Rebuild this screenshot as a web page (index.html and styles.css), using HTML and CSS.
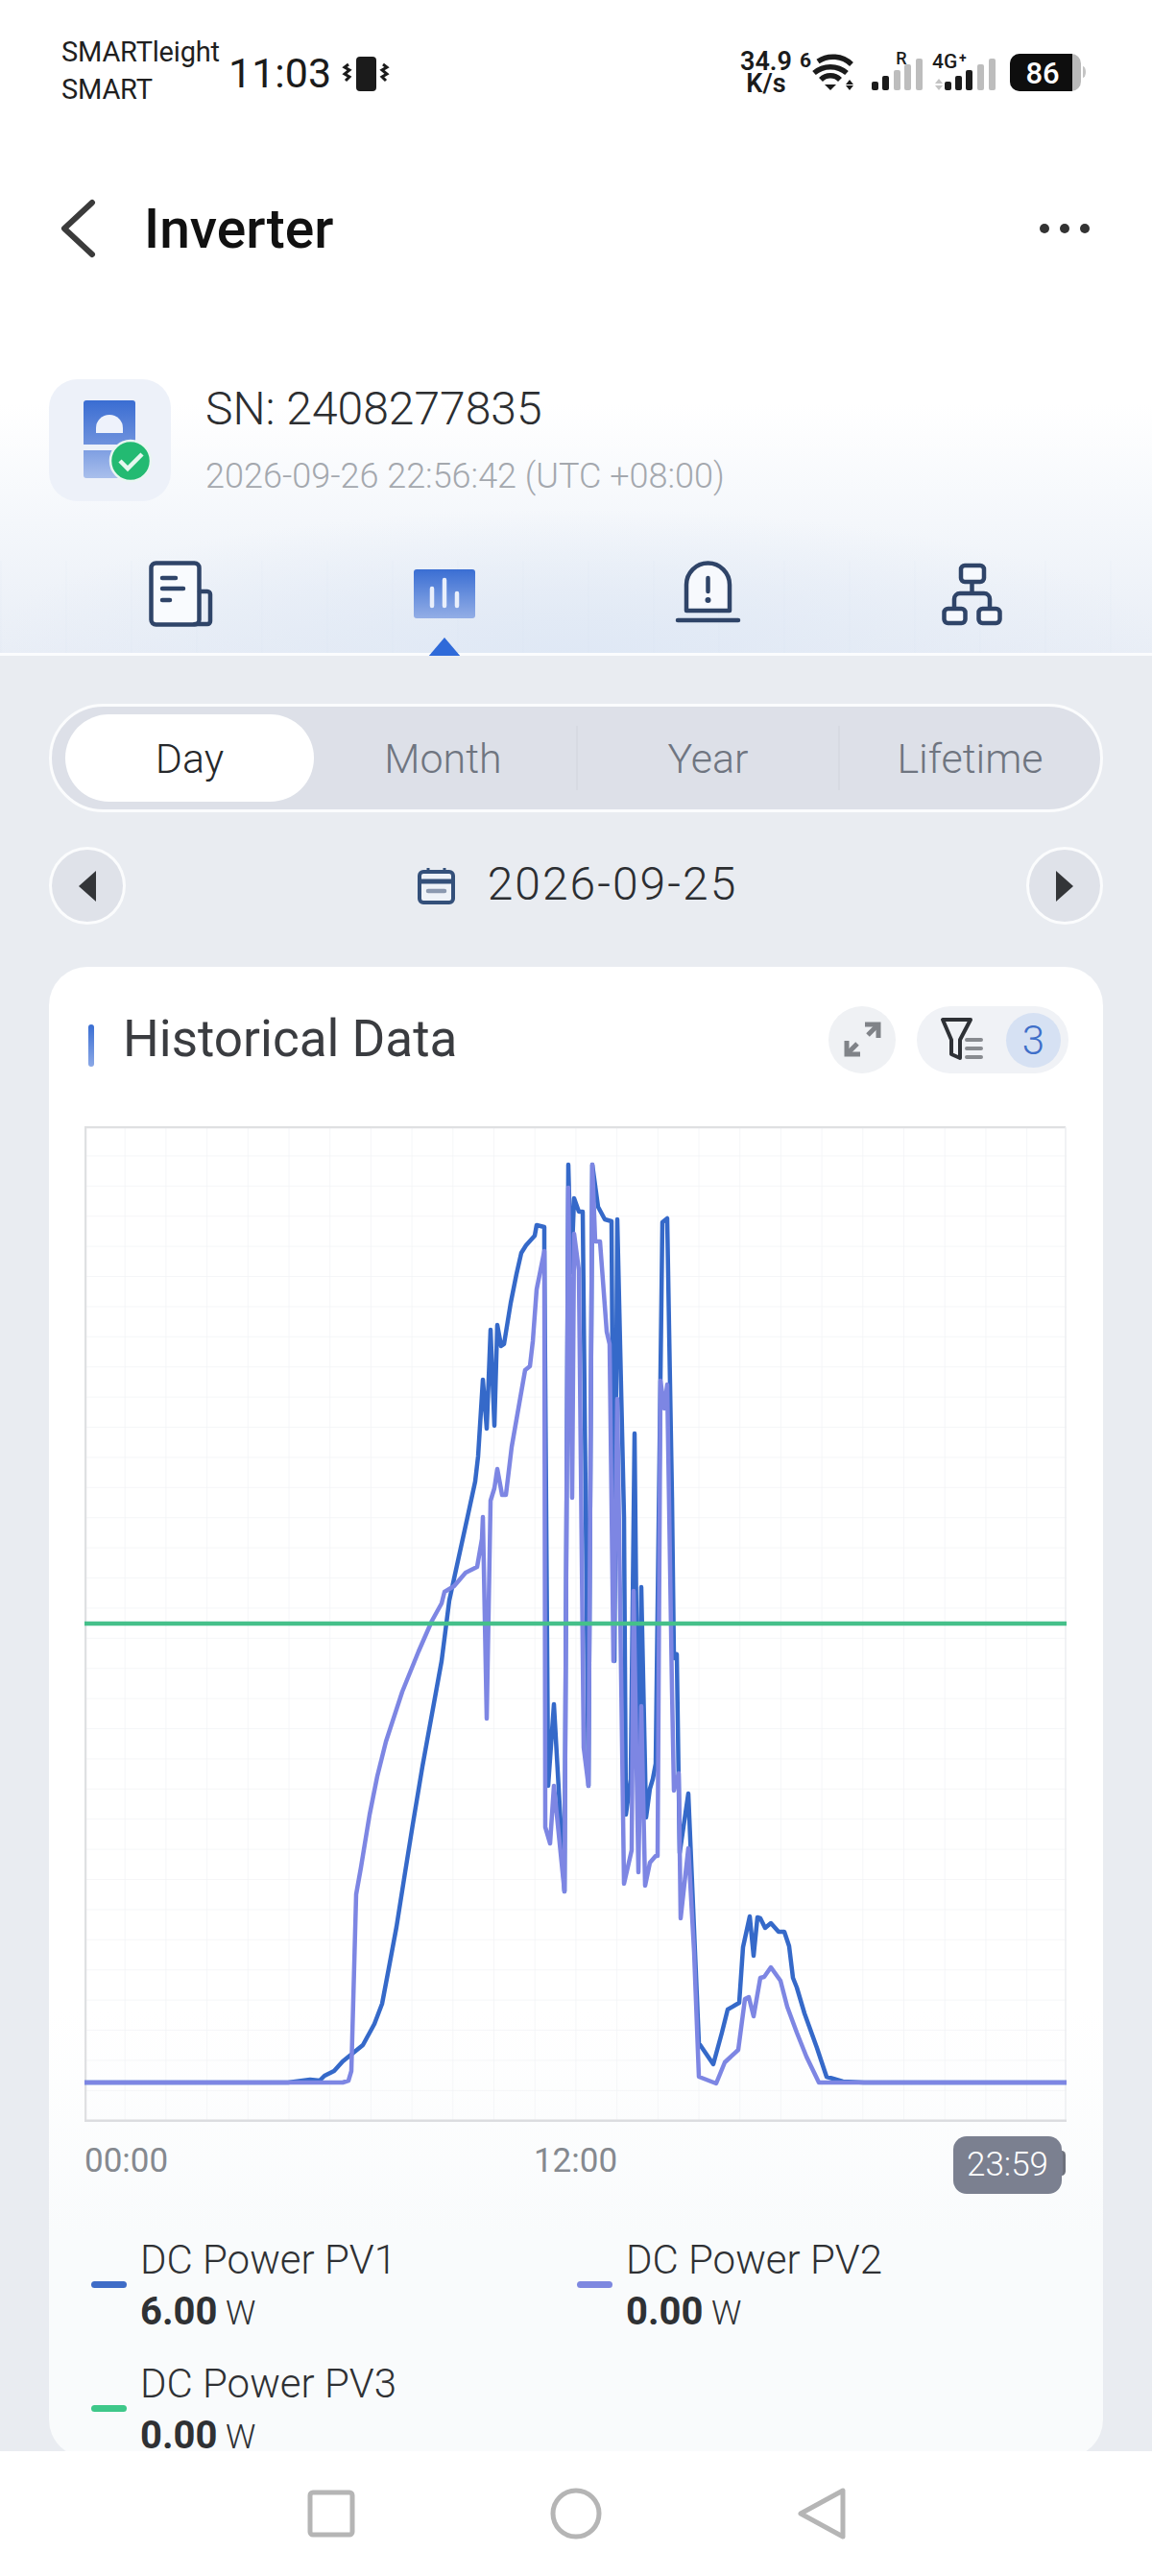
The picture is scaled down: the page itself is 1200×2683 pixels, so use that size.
FILE: index.html
```html
<!DOCTYPE html>
<html lang="en">
<head>
    <meta charset="UTF-8">
    <meta name="viewport" content="width=device-width, initial-scale=1.0">
    <title>Inverter</title>
    <link rel="stylesheet" href="styles.css">
</head>
<body>
<div class="phone">
    <div class="top-section">
        <div class="statusbar">
            <div class="carrier">
                <div>SMARTleight</div>
                <div>SMART</div>
            </div>
            <div class="clock">11:03</div>
            <svg class="vibrate" width="50" height="40" viewBox="0 0 50 40">
                <rect x="15" y="2" width="21" height="36" rx="4" fill="#1b1b1b"/>
                <path d="M7 10l-4 3 5 3-5 4 5 3-4 4" fill="none" stroke="#1b1b1b" stroke-width="3"/>
                <path d="M43 10l4 3-5 3 5 4-5 3 4 4" fill="none" stroke="#1b1b1b" stroke-width="3"/>
            </svg>
            <svg class="status-icons" width="370" height="60" viewBox="0 0 370 60">
                <text class="st-speed" x="33" y="28" text-anchor="middle">34.9</text>
                <text class="st-speed" x="33" y="51" text-anchor="middle">K/s</text>
                <text class="st-six" x="74" y="25" text-anchor="middle">6</text>
                <g fill="none" stroke="#1b1b1b" stroke-width="5.5">
                    <path d="M87 19a28 28 0 0 1 35 3"/>
                    <path d="M83 26a26 26 0 0 1 34 0" transform="translate(0 5)"/>
                    <path d="M90 37a14 14 0 0 1 20 0" transform="translate(0 1)"/>
                </g>
                <path d="M94 43h12l-6 6z" fill="#1b1b1b"/>
                <path d="M120 38l4 5h-8zM120 49l4-5h-8z" fill="#1b1b1b"/>
                <g fill="#1b1b1b">
                    <rect x="143" y="40" width="7" height="9" rx="2"/>
                    <rect x="154" y="34" width="7" height="15" rx="2"/>
                </g>
                <g fill="#bdbdbd">
                    <rect x="166" y="28" width="7" height="21" rx="2"/>
                    <rect x="177" y="22" width="7" height="27" rx="2"/>
                    <rect x="189" y="16" width="7" height="33" rx="2"/>
                </g>
                <text class="st-r" x="174" y="22" text-anchor="middle">R</text>
                <text class="st-net" x="206" y="26">4G</text>
                <text class="st-plus" x="234" y="20">+</text>
                <path d="M213 37l4 5h-8zM213 49l4-5h-8z" fill="#c4c4c4"/>
                <g fill="#1b1b1b">
                    <rect x="219" y="40" width="7" height="9" rx="2"/>
                    <rect x="230" y="34" width="7" height="15" rx="2"/>
                    <rect x="241" y="28" width="7" height="21" rx="2"/>
                </g>
                <g fill="#bdbdbd">
                    <rect x="253" y="22" width="7" height="27" rx="2"/>
                    <rect x="265" y="16" width="7" height="33" rx="2"/>
                </g>
                <rect x="287" y="11" width="74" height="39" rx="10" fill="#b9b9b9"/>
                <path d="M297 11h55v39h-55a10 10 0 0 1-10-10v-19a10 10 0 0 1 10-10z" fill="#0e0e0e"/>
                <path d="M363 24a3 6 0 0 1 3 6a3 6 0 0 1-3 6z" fill="#c4c4c4"/>
                <text class="st-batt" x="321" y="42" text-anchor="middle">86</text>
            </svg>
        </div>

        <div class="appbar">
            <svg width="44" height="64" viewBox="0 0 44 64">
                <path d="M36 5L7 32l29 27" fill="none" stroke="#3b3b3b" stroke-width="6" stroke-linecap="round" stroke-linejoin="round"/>
            </svg>
            <h1>Inverter</h1>
            <div class="more"><i></i><i></i><i></i></div>
        </div>

        <div class="device">
            <div class="device-tile">
                <svg width="127" height="127" viewBox="0 0 127 127">
                    <defs>
                        <linearGradient id="blockA" x1="0" y1="0" x2="0" y2="1">
                            <stop offset="0" stop-color="#3a6dd2"/>
                            <stop offset="1" stop-color="#6f92dd"/>
                        </linearGradient>
                        <linearGradient id="blockB" x1="0" y1="0" x2="0" y2="1">
                            <stop offset="0" stop-color="#7f9fe2"/>
                            <stop offset="1" stop-color="#a9bfec"/>
                        </linearGradient>
                    </defs>
                    <path d="M39 22h48a3 3 0 0 1 3 3v43H36V25a3 3 0 0 1 3-3z" fill="url(#blockA)"/>
                    <path d="M36 74h54v26a3 3 0 0 1-3 3H39a3 3 0 0 1-3-3z" fill="url(#blockB)"/>
                    <path d="M49 56V51a14 14 0 0 1 28 0v5z" fill="#eef2fb"/>
                    <circle cx="85" cy="85" r="21" fill="#23ba72" stroke="#eaf6f2" stroke-width="2.5"/>
                    <path d="M74 85l8 8 15-15" fill="none" stroke="#e6f7ee" stroke-width="4.5"/>
                </svg>
            </div>
            <div class="device-info">
                <div class="sn">SN: 2408277835</div>
                <div class="stamp">2026-09-26 22:56:42 (UTC +08:00)</div>
            </div>
        </div>

        <div class="tabs">
            <div class="tab">
                <svg width="70" height="70" viewBox="0 0 70 70" fill="none" stroke="#2f4468" stroke-width="4.5" stroke-linecap="round" stroke-linejoin="round">
                    <rect x="4.5" y="2.5" width="50" height="64" rx="5" fill="#f9fbfe"/>
                    <path d="M55 32h8a3 3 0 0 1 3 3v28a3 3 0 0 1-3 3H50"/>
                    <path d="M16 18h14M16 29h22M16 41h8"/>
                </svg>
            </div>
            <div class="tab active">
                <svg width="70" height="70" viewBox="0 0 70 70">
                    <defs>
                        <linearGradient id="tabChart" x1="0" y1="0" x2="0" y2="1">
                            <stop offset="0" stop-color="#3a6ed3"/>
                            <stop offset="1" stop-color="#93aee6"/>
                        </linearGradient>
                    </defs>
                    <rect x="3" y="9" width="64" height="51" rx="3" fill="url(#tabChart)"/>
                    <path d="M22 29v18M35 20v27M48 34v13" stroke="#e9effb" stroke-width="4.5" stroke-linecap="round"/>
                </svg>
                <div class="tab-marker"></div>
            </div>
            <div class="tab">
                <svg width="70" height="70" viewBox="0 0 70 70" fill="none" stroke="#2f4468" stroke-width="4.5" stroke-linecap="round">
                    <path d="M13 52V25a22 22 0 0 1 45 0v27z" fill="#f7f9fd" stroke-linejoin="round"/>
                    <path d="M35.5 18v14"/>
                    <circle cx="35.5" cy="41" r="3" fill="#2f4468" stroke="none"/>
                    <path d="M4 62h63"/>
                </svg>
            </div>
            <div class="tab">
                <svg width="70" height="70" viewBox="0 0 70 70" fill="none" stroke="#2f4468" stroke-width="4.5">
                    <rect x="24" y="5" width="24" height="17" rx="4" fill="#f7f9fd"/>
                    <rect x="6.5" y="50" width="22" height="15" rx="4" fill="#f7f9fd"/>
                    <rect x="42.5" y="50" width="22" height="15" rx="4" fill="#f7f9fd"/>
                    <path d="M35.5 22v12M17 50v-10a6 6 0 0 1 6-6h25a6 6 0 0 1 6 6v10"/>
                </svg>
            </div>
        </div>
    </div>

    <div class="content">
        <div class="range">
            <div class="range-item selected">Day</div>
            <div class="range-item month">Month</div>
            <div class="range-item split">Year</div>
            <div class="range-item split">Lifetime</div>
        </div>

        <div class="date-row">
            <div class="round-btn"><span class="arrow-left"></span></div>
            <div class="date-value">
                <svg width="39" height="39" viewBox="0 0 39 39">
                    <rect x="2" y="5" width="35" height="32" rx="4" fill="#eef2f8" stroke="#34507a" stroke-width="4"/>
                    <path d="M2 15h35" stroke="#34507a" stroke-width="5"/>
                    <path d="M11 1v6M28 1v6" stroke="#34507a" stroke-width="3"/>
                    <path d="M11 25h17" stroke="#8b99b0" stroke-width="4.5" stroke-linecap="round"/>
                </svg>
                <span class="date-text">2026-09-25</span>
            </div>
            <div class="round-btn"><span class="arrow-right"></span></div>
        </div>

        <div class="card">
            <div class="card-head">
                <div class="card-title">Historical Data</div>
                <div class="round-tool">
                    <svg width="70" height="70" viewBox="0 0 70 70" fill="none" stroke="#808388" stroke-width="5">
                        <path d="M20 49l10-10M41 30l10-10"/>
                        <path d="M19 36v14h14M38 19h14v14"/>
                    </svg>
                </div>
                <div class="filter-pill">
                    <svg width="56" height="56" viewBox="0 0 56 56" fill="none">
                        <path d="M9 7h29l-11 21v19l-9-4V28z" stroke="#2e3136" stroke-width="4" stroke-linejoin="round"/>
                        <path d="M34 28h15M34 37h15M34 46h15" stroke="#888b90" stroke-width="4" stroke-linecap="round"/>
                    </svg>
                    <span class="filter-count">3</span>
                </div>
            </div>

            <svg class="chart" width="1023" height="1037" viewBox="88 1173 1023 1037">
                <defs>
                    <pattern id="gridCell" x="88" y="1173" width="42.7" height="31.4" patternUnits="userSpaceOnUse">
                        <path d="M42.7 0V31.4M0 31.4H42.7" fill="none" stroke="#f2f4f6" stroke-width="1.5"/>
                    </pattern>
                </defs>
                <rect x="88" y="1173" width="1023" height="1037" fill="url(#gridCell)"/>
                <path d="M89 2209V1174H1110" fill="none" stroke="#dfe0e2" stroke-width="2.5"/>
                <path d="M1110 1174V2209" fill="none" stroke="#eceef0" stroke-width="1.5"/>
                <path d="M88 2209H1111" fill="none" stroke="#dcdde0" stroke-width="3"/>
                <polyline class="line-pv1" points="88,2169 300,2169 323,2166 333,2167 338,2162 348,2157 357,2147 378,2130 390,2108 398,2087 405,2050 413,2007 422,1950 430,1900 440,1840 460,1730 468,1667 487,1580 495,1543 498,1517 503,1437 507,1488 511,1385 515,1485 518,1380 522,1402 525,1400 532,1357 538,1327 543,1305 548,1297 557,1287 559,1276 567,1278 567,1300 571,1860 577,1775 588,1970 592,1213 595,1325 598,1248 603,1262 607,1262 613,1860 617,1213 623,1257 630,1270 637,1272 640,1730 643,1270 650,1580 652,1890 657,1853 661,1493 665,1900 668,1653 673,1893 677,1863 680,1853 683,1837 690,1273 695,1269 700,1560 702,1727 705,1723 708,1930 717,1868 728,2128 743,2150 752,2117 758,2093 770,2086 774,2028 781,1996 785,2037 789,1997 792,1998 797,2008 803,2003 811,2012 817,2012 822,2027 826,2060 830,2070 838,2097 851,2133 861,2163 878,2168 900,2169 1111,2169"/>
                <polyline class="line-pv2" points="88,2169 357,2169 363,2167 366,2157 371,1973 376,1945 385,1890 393,1850 402,1814 419,1762 436,1720 450,1688 460,1670 463,1658 473,1652 485,1638 497,1632 502,1603 503,1580 507,1790 511,1563 515,1550 518,1530 523,1557 527,1557 533,1507 540,1467 547,1427 552,1423 555,1397 559,1343 567,1303 568,1903 573,1920 577,1860 588,1970 592,1237 596,1560 598,1285 603,1323 608,1820 613,1860 617,1213 620,1293 625,1293 632,1387 635,1400 639,1730 643,1457 650,1962 658,1927 660,1657 665,1950 668,1777 672,1964 677,1940 683,1933 685,1933 688,1438 692,1467 695,1442 700,1760 702,1865 707,1847 709,1998 717,1925 723,2033 728,2163 746,2170 755,2148 769,2135 776,2082 780,2080 785,2100 792,2060 796,2059 803,2049 813,2063 820,2090 830,2117 840,2142 853,2169 1111,2169"/>
                <path class="line-pv3" d="M88 1691H1111"/>
            </svg>

            <div class="axis">
                <span class="axis-start">00:00</span>
                <span class="axis-mid">12:00</span>
                <span class="axis-tip">23:59<i class="tip-edge"></i></span>
            </div>

            <div class="legend">
                <div class="legend-item">
                    <span class="swatch pv1"></span>
                    <div>
                        <div class="legend-name">DC Power PV1</div>
                        <div class="legend-value"><b>6.00</b> W</div>
                    </div>
                </div>
                <div class="legend-item">
                    <span class="swatch pv2"></span>
                    <div>
                        <div class="legend-name">DC Power PV2</div>
                        <div class="legend-value"><b>0.00</b> W</div>
                    </div>
                </div>
                <div class="legend-item">
                    <span class="swatch pv3"></span>
                    <div>
                        <div class="legend-name">DC Power PV3</div>
                        <div class="legend-value"><b>0.00</b> W</div>
                    </div>
                </div>
            </div>
        </div>
    </div>

    <div class="navbar">
        <svg width="60" height="60" viewBox="0 0 60 60"><rect x="8" y="8" width="44" height="44" rx="3" fill="none" stroke="#b5b5b5" stroke-width="5"/></svg>
        <svg width="60" height="60" viewBox="0 0 60 60"><circle cx="30" cy="30" r="24" fill="none" stroke="#b5b5b5" stroke-width="5"/></svg>
        <svg width="60" height="60" viewBox="0 0 60 60"><path d="M53 6v48L9 30z" fill="none" stroke="#b5b5b5" stroke-width="5" stroke-linejoin="round"/></svg>
    </div>
</div>
</body>
</html>
```

FILE: styles.css
```css
* {
    box-sizing: border-box;
}
body {
    margin: 0;
    background-color: #fff;
    font-family: Roboto, "Noto Sans", sans-serif;
    color: #2f3134;
}
.phone {
    width: 1200px;
    height: 2683px;
    display: flex;
    flex-direction: column;
    overflow: hidden;
}

/* top part */
.top-section {
    height: 683px;
    border-bottom: 3px solid #fbfcfe;
    background: radial-gradient(ellipse 620px 150px at 50% 100%, #dfe8f5 0%, rgba(223, 232, 245, 0) 100%),
        linear-gradient(180deg, #fff 0, #fff 62%, #f4f7fb 80%, #e9eef6 100%);
}
.statusbar {
    height: 110px;
    padding: 35px 65px 0 64px;
    display: flex;
    align-items: flex-start;
}
.carrier {
    font-size: 29px;
    line-height: 39px;
    color: #1f1f1f;
    width: 174px;
    letter-spacing: -0.2px;
}
.clock {
    font-size: 43px;
    line-height: 50px;
    margin-top: 16px;
    color: #1b1b1b;
}
.vibrate {
    margin: 22px 0 0 11px;
}
.status-icons {
    margin: 10px 0 0 auto;
}
.st-speed {
    font-size: 27px;
    font-weight: 600;
    fill: #1b1b1b;
}
.st-six {
    font-size: 21px;
    font-weight: 700;
    fill: #1b1b1b;
}
.st-r {
    font-size: 18px;
    font-weight: 500;
    fill: #1b1b1b;
}
.st-net {
    font-size: 21px;
    font-weight: 500;
    fill: #1b1b1b;
}
.st-plus {
    font-size: 14px;
    font-weight: 700;
    fill: #1b1b1b;
}
.st-batt {
    font-size: 31px;
    font-weight: 500;
    fill: #fff;
}
.appbar {
    height: 130px;
    margin-top: 63px;
    padding: 0 65px 0 60px;
    display: flex;
    align-items: center;
}
.appbar h1 {
    margin: 0 0 0 46px;
    font-size: 57px;
    font-weight: 500;
    color: #111;
}
.more {
    margin-left: auto;
    display: flex;
    gap: 11px;
}
.more i {
    width: 10px;
    height: 10px;
    border-radius: 50%;
    background-color: #333;
}
.device {
    margin-top: 92px;
    padding-left: 51px;
    display: flex;
    align-items: flex-start;
    gap: 36px;
}
.device-tile {
    width: 127px;
    height: 127px;
    border-radius: 30px;
    background-color: #edf1f9;
}
.sn {
    font-size: 48px;
    font-weight: 300;
    line-height: 60px;
    margin-top: 1px;
    color: #2c2e31;
}
.stamp {
    font-size: 36px;
    font-weight: 300;
    line-height: 44px;
    margin-top: 18px;
    color: #a4a8ae;
}
.tabs {
    height: 96px;
    margin-top: 62px;
    padding: 0 51px;
    display: grid;
    grid-template-columns: repeat(4, 1fr);
    background: repeating-linear-gradient(90deg, rgba(205, 218, 236, 0.07) 0 2px, transparent 2px 68px);
}
.tab {
    display: flex;
    flex-direction: column;
    align-items: center;
}
.tab-marker {
    width: 0;
    height: 0;
    margin-top: 10px;
    border-left: 17px solid transparent;
    border-right: 17px solid transparent;
    border-bottom: 20px solid #2f6ad9;
}

/* main part */
.content {
    flex: 1;
    min-height: 0;
    padding: 50px 51px 0;
    background-color: #e9ecf1;
}
.range {
    height: 113px;
    padding: 8px 0;
    border: 3px solid #fbfcfd;
    border-radius: 57px;
    background-color: #dde0e8;
    display: grid;
    grid-template-columns: repeat(4, 1fr);
}
.range-item {
    display: flex;
    align-items: center;
    justify-content: center;
    font-size: 43px;
    font-weight: 300;
    color: #6f7580;
}
.range-item.selected {
    margin-left: 14px;
    border-radius: 46px;
    background-color: #fff;
    color: #26282b;
}
.range-item.month {
    padding-right: 4px;
}
.range-item.split {
    border-left: 2px solid #d7dae2;
    margin: 12px 0;
}
.date-row {
    height: 81px;
    margin-top: 36px;
    display: flex;
    align-items: center;
    justify-content: space-between;
}
.round-btn {
    width: 80px;
    height: 81px;
    border: 3px solid #fbfcfd;
    border-radius: 50%;
    background-color: #dfe2e9;
    display: flex;
    align-items: center;
    justify-content: center;
}
.arrow-left {
    border-top: 16px solid transparent;
    border-bottom: 16px solid transparent;
    border-right: 18px solid #333538;
}
.arrow-right {
    border-top: 16px solid transparent;
    border-bottom: 16px solid transparent;
    border-left: 18px solid #333538;
}
.date-value {
    display: flex;
    align-items: center;
    gap: 34px;
    margin-left: 3px;
    font-size: 48px;
    font-weight: 300;
    letter-spacing: 2px;
    color: #2c2e31;
}
.date-text {
    margin-top: -4px;
}
.card {
    height: 1553px;
    margin-top: 44px;
    padding: 41px 38px 0 37px;
    border-radius: 40px;
    background: linear-gradient(180deg, #fff 0, #fff 70%, #f9fbfc 85%);
}
.card-head {
    height: 70px;
    display: flex;
    align-items: center;
}
.card-title {
    flex: 1;
    padding-left: 40px;
    font-size: 53px;
    font-weight: 400;
    color: #3a3c40;
    position: relative;
    margin-top: -2px;
}
.card-title::before {
    content: "";
    position: absolute;
    left: 4px;
    top: 16px;
    width: 6px;
    height: 44px;
    border-radius: 3px;
    background: linear-gradient(180deg, #3a6ed3, #8ba8e6);
}
.round-tool {
    width: 70px;
    height: 70px;
    border-radius: 50%;
    background-color: #eff1f4;
}
.filter-pill {
    width: 158px;
    height: 70px;
    margin: 0 -2px 0 22px;
    padding: 0 8px 0 18px;
    border-radius: 35px;
    background-color: #f0f2f6;
    display: flex;
    align-items: center;
    justify-content: space-between;
}
.filter-count {
    width: 57px;
    height: 57px;
    border-radius: 50%;
    background-color: #d6e1f3;
    color: #3f6fc9;
    font-size: 42px;
    font-weight: 300;
    display: flex;
    align-items: center;
    justify-content: center;
}
.chart {
    display: block;
    margin-top: 55px;
}
.line-pv1,
.line-pv2,
.line-pv3 {
    fill: none;
    stroke-width: 4.5;
    stroke-linejoin: round;
}
.line-pv1 {
    stroke: #3569c9;
}
.line-pv2 {
    stroke: #7d86e3;
}
.line-pv3 {
    stroke: #45c08a;
}
.axis {
    height: 60px;
    margin-top: 15px;
    display: grid;
    grid-template-columns: 1fr auto 1fr;
    font-size: 35px;
    font-weight: 400;
    line-height: 52px;
    color: #85898f;
}
.axis-tip {
    justify-self: end;
    width: 113px;
    height: 60px;
    margin-right: 5px;
    border-radius: 14px;
    background-color: #7b8090;
    color: #fff;
    font-weight: 300;
    line-height: 60px;
    text-align: center;
    position: relative;
}
.tip-edge {
    position: absolute;
    right: -4px;
    top: 15px;
    width: 9px;
    height: 26px;
    border-radius: 5px;
    border-right: 3px solid #6d717c;
    background-color: #7b8090;
}
.legend {
    margin-top: 42px;
    padding-left: 7px;
    display: grid;
    grid-template-columns: 506px 1fr;
    row-gap: 27px;
}
.legend-item {
    display: flex;
    align-items: center;
    gap: 14px;
}
.swatch {
    width: 37px;
    height: 7px;
    margin-top: 3px;
    border-radius: 4px;
}
.pv1 {
    background-color: #3f6cc7;
}
.pv2 {
    background-color: #7e88e0;
}
.pv3 {
    background-color: #3fc88a;
}
.legend-name {
    font-size: 42px;
    font-weight: 300;
    line-height: 53px;
    color: #2f3134;
}
.legend-value {
    font-size: 35px;
    font-weight: 300;
    line-height: 38px;
    margin-top: 9px;
}
.legend-value b {
    font-size: 40px;
    font-weight: 700;
}

/* system nav, sits over the scrolling card */
.navbar {
    position: relative;
    height: 130px;
    background-color: #fff;
    display: flex;
    align-items: center;
    justify-content: center;
    gap: 195px;
}
```
